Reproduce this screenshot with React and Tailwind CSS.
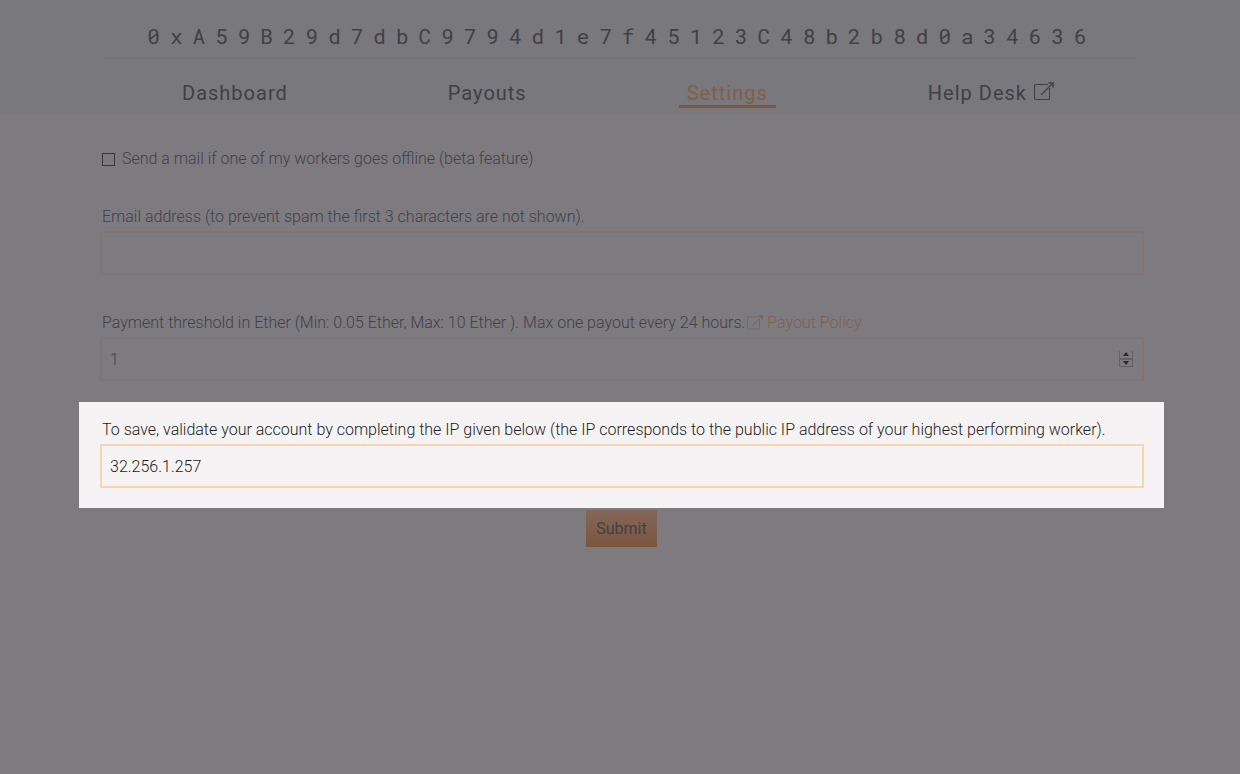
import { useState } from "react";

function ExternalIcon({ className }) {
  return (
    <svg viewBox="0 0 20 20" className={className} fill="none" stroke="currentColor" strokeWidth="1.1" aria-hidden="true">
      <path d="M14 2.500H1.500a1 1 0 0 0-1 1v13a1 1 0 0 0 1 1h13a1 1 0 0 0 1-1V6" />
      <path d="M7 13 19 1" />
      <path d="M14.500 1h4.500v4.500" strokeWidth="1.600" />
    </svg>
  );
}

const tabs = [
  { label: "Dashboard" },
  { label: "Payouts" },
  { label: "Settings", active: true },
  { label: "Help Desk", external: true },
];

function Header() {
  return (
    <header className="bg-[#79787c] px-[102px] pt-4 pb-[3px] shadow-[0_1px_3px_#767579]">
      <h1 className="border-b border-[#727176] pb-[1px] pl-1 text-center font-['Roboto_Mono','Liberation_Mono',monospace] text-[21px] leading-[41px] font-normal tracking-[10px] whitespace-nowrap">
        0xA59B29d7dbC9794d1e7f45123C48b2b8d0a34636
      </h1>
      <nav className="mt-[23px] flex justify-around pr-1 text-[20px] leading-[23px] tracking-[1px]">
        {tabs.map((t) => (
          <a
            key={t.label}
            href="#"
            aria-current={t.active ? "page" : undefined}
            className={
              t.active
                ? "border-b-3 border-[#80573f] px-2 text-[#835e4c]"
                : "flex gap-[7px] border-b-3 border-transparent px-2"
            }
          >
            {t.label}
            {t.external && <ExternalIcon className="size-5" />}
          </a>
        ))}
      </nav>
    </header>
  );
}

const field = "block h-11 w-full appearance-none border-2 px-2 outline-none";
const label = "mb-[2px] block pl-[2px] leading-6";

export default function App() {
  const [threshold, setThreshold] = useState(1);
  const [ip, setIp] = useState("32.256.1.257");
  return (
    <div className="min-h-screen bg-[#7d7b80] font-[Roboto,sans-serif] text-base text-[#404047]">
      <Header />
      <form className="pr-[76px] pl-[79px] font-light" onSubmit={(e) => e.preventDefault()}>
        <div className="pr-5 pl-[21px]">
          <div className="flex items-center gap-[7px] pt-9 pl-[2px] leading-6">
            <input
              id="notify"
              type="checkbox"
              className="size-[13px] appearance-none border border-[#37373d] checked:bg-[#37373d]"
            />
            <label htmlFor="notify">Send a mail if one of my workers goes offline (beta feature)</label>
          </div>
          <div className="mt-[34px]">
            <label htmlFor="email" className={label}>
              Email address (to prevent spam the first 3 characters are not shown).
            </label>
            <input id="email" type="email" className={`${field} border-[#82746f]`} />
          </div>
          <div className="mt-9">
            <div className="flex">
              <label htmlFor="threshold" className={label}>
                Payment threshold in Ether (Min: 0.05 Ether, Max: 10 Ether ). Max one payout every 24 hours.
              </label>
              <a href="#" className="ml-[2px] flex gap-1 leading-6 text-[#835e4c]">
                <ExternalIcon className="mt-1 size-4" />
                Payout Policy
              </a>
            </div>
            <div className="flex h-11 items-center border-2 border-[#82746f] pr-[9px]">
              <input
                id="threshold"
                type="number"
                min="0.05"
                max="10"
                value={threshold}
                onChange={(e) => setThreshold(e.target.value)}
                className="min-w-0 flex-1 px-2 pt-[2px] outline-none [appearance:textfield] [&::-webkit-inner-spin-button]:appearance-none"
              />
              <div className="grid h-4 w-[14px] grid-rows-2 border border-t-0 border-[#626168]">
                <button
                  type="button"
                  aria-label="Increase"
                  onClick={() => setThreshold((v) => Math.min(10, Number(v) + 1))}
                  className="flex items-center justify-center border-b border-[#626168]"
                >
                  <svg viewBox="0 0 6 4" className="h-[4px] w-[6px] fill-[#29292e]"><path d="M3 0 6 4H0z" /></svg>
                </button>
                <button
                  type="button"
                  aria-label="Decrease"
                  onClick={() => setThreshold((v) => Math.max(0, Number(v) - 1))}
                  className="flex items-center justify-center border-t border-[#626168]"
                >
                  <svg viewBox="0 0 6 4" className="h-[4px] w-[6px] fill-[#29292e]"><path d="M0 0h6L3 4z" /></svg>
                </button>
              </div>
            </div>
          </div>
        </div>
        <section className="mt-[21px] bg-[#f5f3f4] pt-4 pr-5 pb-5 pl-[21px] text-[#1d1d22]">
          <label htmlFor="ip" className={label}>
            To save, validate your account by completing the IP given below (the IP corresponds to the public IP address of your highest performing worker).
          </label>
          <input
            id="ip"
            type="text"
            value={ip}
            onChange={(e) => setIp(e.target.value)}
            className={`${field} border-[#f9d4b4]`}
          />
        </section>
        <div className="mt-[2px] flex justify-center">
          <button type="submit" className="h-[37px] bg-linear-to-b from-[#84665a] to-[#7b563d] px-[10px] pt-[1px] font-normal">
            Submit
          </button>
        </div>
      </form>
    </div>
  );
}
